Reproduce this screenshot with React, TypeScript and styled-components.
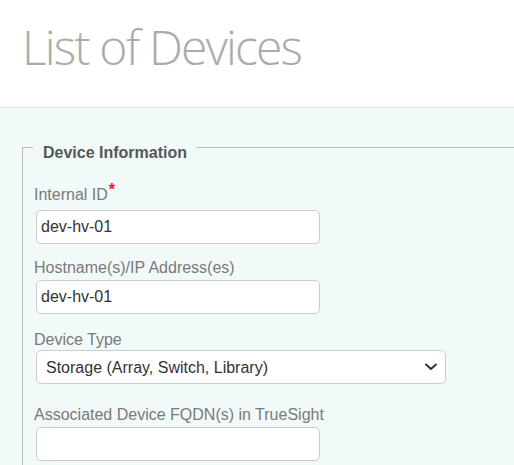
import styled, { createGlobalStyle } from 'styled-components';

const GlobalStyle = createGlobalStyle`
  html, body {
    margin: 0;
    padding: 0;
    background: #ffffff;
  }
  body {
    font-family: "Liberation Sans", Arial, sans-serif;
    overflow: hidden;
  }
`;

export default function App() {
  return (
    <Page>
      <GlobalStyle />
      <Header>
        <Title>List of Devices</Title>
      </Header>
      <Content>
        <Fieldset>
          <Legend>Device Information</Legend>

          <Field>
            <Label $gap={5}>
              Internal ID<Required>*</Required>
            </Label>
            <TextInput defaultValue='dev-hv-01' />
          </Field>

          <Field $top={14}>
            <Label $gap={2}>Hostname(s)/IP Address(es)</Label>
            <TextInput defaultValue='dev-hv-01' />
          </Field>

          <Field $top={16}>
            <Label $gap={0}>Device Type</Label>
            <SelectWrap>
              <Select defaultValue='storage'>
                <option value='storage'>Storage (Array, Switch, Library)</option>
                <option value='server'>Server</option>
                <option value='network'>Network</option>
              </Select>
              <Chevron width='14' height='8' viewBox='0 0 14 8'>
                <polyline points='2,1.5 7,6 12,1.5' fill='none' stroke='#333' strokeWidth='2' strokeLinecap='round' strokeLinejoin='round' />
              </Chevron>
            </SelectWrap>
          </Field>

          <Field $top={21}>
            <Label $gap={2}>Associated Device FQDN(s) in TrueSight</Label>
            <TextInput defaultValue='' />
          </Field>
        </Fieldset>
      </Content>
    </Page>
  );
}

const Page = styled.div`
  display: flex;
  flex-direction: column;
  height: 100vh;
  overflow: hidden;
`;

const Header = styled.header`
  box-sizing: content-box;
  height: 86px;
  padding: 21px 0 0 22px;
  background: #ffffff;
  border-bottom: 1px solid #e2e4e4;
`;

const Title = styled.h1`
  margin: 0;
  font-family: "Open Sans", sans-serif;
  font-weight: 300;
  font-size: 48px;
  line-height: 1.1;
  color: #ababab;
  letter-spacing: -1.8px;
`;

const Content = styled.main`
  flex: 1;
  min-height: 0;
  background: #f2f9f9;
  padding: 25px 0 0 22px;
  overflow: hidden;
`;

const Fieldset = styled.fieldset`
  margin: 0 -40px 0 0;
  padding: 23px 0 40px 11px;
  border: 1px solid #bdbdbd;
  min-width: 0;
`;

const Legend = styled.legend`
  margin-left: -1px;
  padding: 11px 9px 0 10px;
  font-size: 16px;
  line-height: 18px;
  font-weight: bold;
  color: #575757;
`;

const Field = styled.div<{ $top?: number }>`
  display: flex;
  flex-direction: column;
  align-items: flex-start;
  margin-top: ${(p) => p.$top ?? 0}px;
`;

const Label = styled.label<{ $gap: number }>`
  display: block;
  font-size: 16px;
  line-height: 20px;
  color: #7a7a7a;
  margin-bottom: ${(p) => p.$gap}px;
`;

const Required = styled.span`
  color: #e8201f;
  font-weight: bold;
  font-size: 16px;
  line-height: 0;
  vertical-align: 5px;
  margin-left: 1px;
`;

const TextInput = styled.input`
  box-sizing: border-box;
  width: 284px;
  height: 34px;
  margin: 0 0 0 2px;
  padding: 0 4px;
  border: 1px solid #cccccc;
  border-radius: 5px;
  background: #ffffff;
  font-family: "Liberation Sans", Arial, sans-serif;
  font-size: 16px;
  color: #333333;
  outline: none;
`;

const SelectWrap = styled.div`
  position: relative;
  margin-left: 2px;
`;

const Select = styled.select`
  box-sizing: border-box;
  width: 410px;
  height: 34px;
  padding: 0 36px 0 9px;
  border: 1px solid #cccccc;
  border-radius: 5px;
  background: #ffffff;
  font-family: "Liberation Sans", Arial, sans-serif;
  font-size: 16px;
  color: #333333;
  appearance: none;
  outline: none;
`;

const Chevron = styled.svg`
  position: absolute;
  right: 8px;
  top: 13px;
  pointer-events: none;
`;
